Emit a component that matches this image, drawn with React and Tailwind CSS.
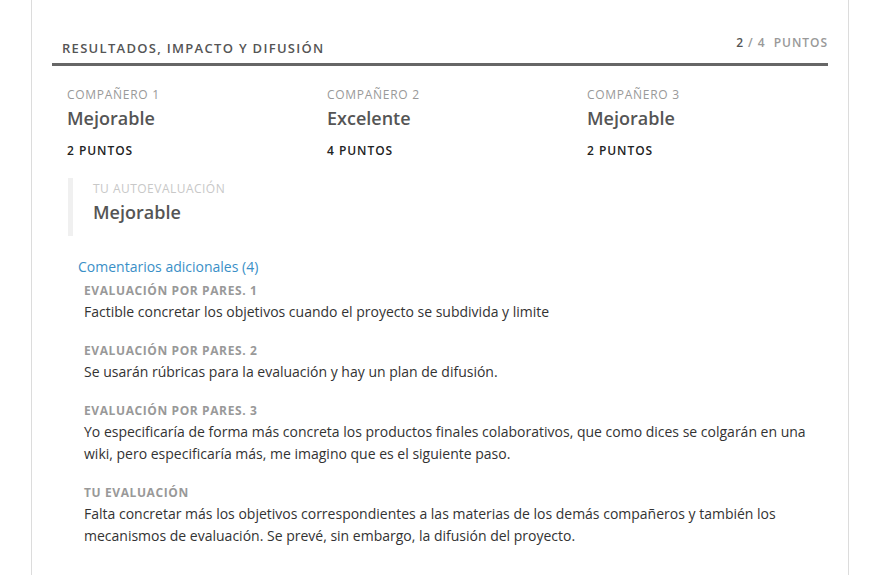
const peers = [
  { label: "Compañero 1", grade: "Mejorable", points: 2 },
  { label: "Compañero 2", grade: "Excelente", points: 4 },
  { label: "Compañero 3", grade: "Mejorable", points: 2 },
];

const comments = [
  {
    title: "Evaluación por pares. 1",
    text: "Factible concretar los objetivos cuando el proyecto se subdivida y limite",
  },
  {
    title: "Evaluación por pares. 2",
    text: "Se usarán rúbricas para la evaluación y hay un plan de difusión.",
  },
  {
    title: "Evaluación por pares. 3",
    text: "Yo especificaría de forma más concreta los productos finales colaborativos, que como dices se colgarán en una wiki, pero especificaría más, me imagino que es el siguiente paso.",
  },
  {
    title: "Tu evaluación",
    text: "Falta concretar más los objetivos correspondientes a las materias de los demás compañeros y también los mecanismos de evaluación. Se prevé, sin embargo, la difusión del proyecto.",
  },
];

export default function App() {
  return (
    <div className="min-h-[575px] bg-white font-['Open_Sans',sans-serif] text-[#333]">
      <div className="ml-[31px] mr-[28px] min-h-[575px] border-x border-[#dcdcdc] px-5 pt-[34px]">
        <div className="flex items-start justify-between border-b-[3px] border-[#666] pb-[5px] pl-[10px]">
          <h2 className="mt-[4px] text-[13px] font-semibold uppercase leading-[20px] tracking-[0.1em] text-[#555]">
            Resultados, impacto y difusión
          </h2>
          <div className="text-[12px] font-semibold uppercase leading-[18px] tracking-[0.08em] text-[#999]">
            <span className="text-[#555]">2</span> / 4 &nbsp;Puntos
          </div>
        </div>

        <div className="grid grid-cols-[260px_260px_260px] px-[15px] pt-[20px]">
          {peers.map((peer) => (
            <div key={peer.label}>
              <p className="text-[12px] uppercase leading-[18px] tracking-[0.06em] text-[#999]">
                {peer.label}
              </p>
              <p className="mt-[1px] text-[18px] font-semibold leading-[26px] text-[#555]">
                {peer.grade}
              </p>
              <p className="mt-[11px] text-[12px] font-semibold uppercase leading-[18px] tracking-[0.08em] text-[#222]">
                {peer.points} Puntos
              </p>
            </div>
          ))}
        </div>

        <div className="ml-[16px] mt-[18px] border-l-[5px] border-[#f0f0f0] pb-[10px] pl-[20px] pt-[2px]">
          <p className="text-[12px] uppercase leading-[18px] tracking-[0.04em] text-[#c8c8c8]">
            Tu autoevaluación
          </p>
          <p className="text-[18px] font-semibold leading-[28px] text-[#555]">Mejorable</p>
        </div>

        <div className="pl-[26px] pt-[21px]">
          <p className="text-[14px] leading-[20px] text-[#3a8fc7]">Comentarios adicionales (4)</p>
          <div className="space-y-[18px] pl-[6px] pt-[4px]">
            {comments.map((c) => (
              <div key={c.title}>
                <p className="text-[12px] font-bold uppercase leading-[20px] tracking-[0.05em] text-[#999]">
                  {c.title}
                </p>
                <p className="text-[14px] leading-[22px] text-[#333]">{c.text}</p>
              </div>
            ))}
          </div>
        </div>
      </div>
    </div>
  );
}
